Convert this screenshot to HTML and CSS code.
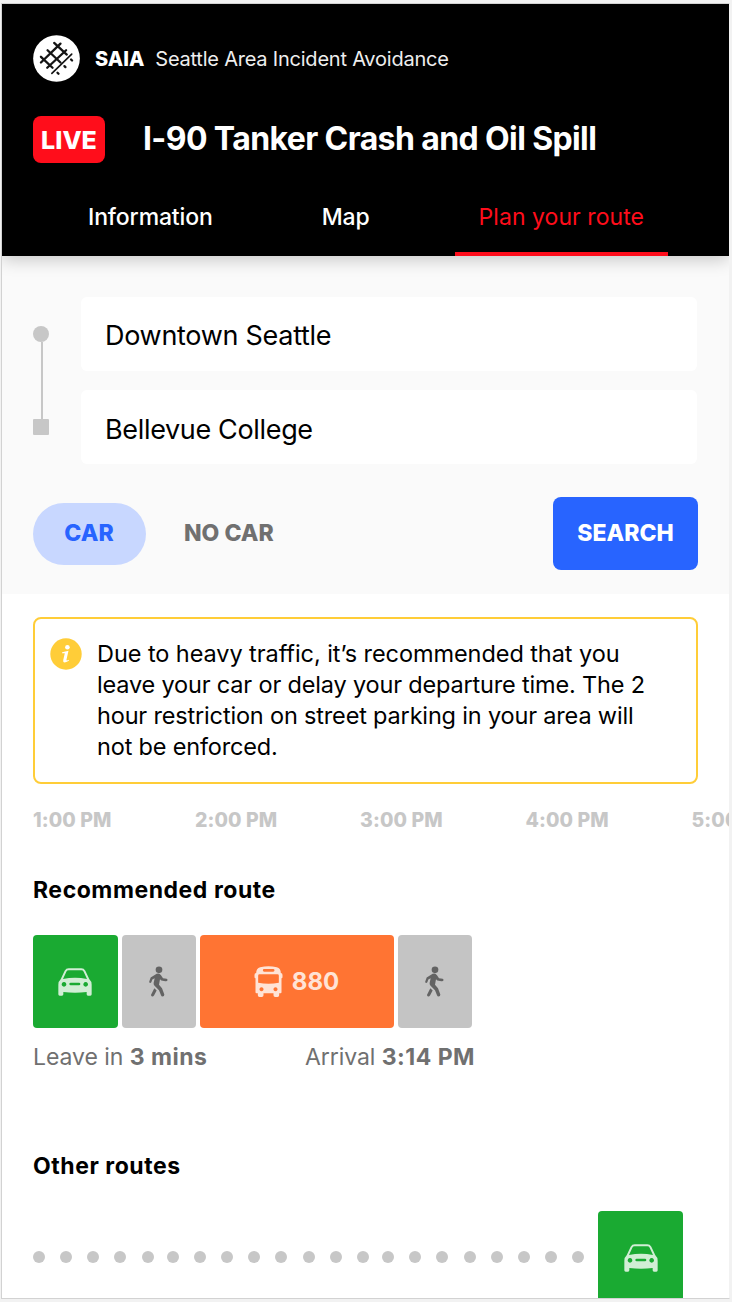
FILE: index.html
```html
<!DOCTYPE html>
<html lang="en">
<head>
<meta charset="utf-8">
<title>SAIA - Plan your route</title>
<link rel="stylesheet" href="styles.css">
</head>
<body>
<svg class="defs" width="0" height="0">
  <symbol id="car" viewBox="0 0 102 84">
    <path fill-rule="evenodd" d="M8 34 L20 8 Q24 1 32 1 H70 Q78 1 82 8 L94 34 Q101 40 101 50 V79 Q101 83 97 83 H90 Q86 83 86 79 V72 Q51 77 16 72 V79 Q16 83 12 83 H5 Q1 83 1 79 V50 Q1 40 8 34Z M15 33 Q51 26 87 33 L77 11 Q75 7 70 7 H32 Q27 7 25 11Z M18 42 a7 7 0 1 0 .01 0Z M83 42 a7 7 0 1 0 .01 0Z M38 44 a4 4 0 0 0 0 8 H63 a4 4 0 0 0 0 -8Z"/>
  </symbol>
  <symbol id="walk" viewBox="0 0 57 92">
    <circle cx="30" cy="11" r="10"/>
    <path d="M23 23 Q31 20 36 27 L42 36 L53 38 Q57 40 55 44 Q53 46 49 45 L37 43 L33 39 L30 56 L39 66 L46 85 Q46 91 41 91 Q37 91 36 87 L30 72 L16 58 Q13 55 14 50 L17 36 L10 40 L7 48 Q4 52 1 49 Q0 47 1 45 L5 34Z"/>
    <path d="M16 66 L23 73 L15 88 Q12 92 8 90 Q5 88 7 84Z"/>
  </symbol>
  <symbol id="bus" viewBox="0 0 86 93">
    <path fill-rule="evenodd" d="M6 21 Q6 8 18 4 Q43 -2 68 4 Q80 8 80 21 Q85 21 85 27 V33 Q85 37 82 37 V79 Q82 82 79 82 H75 V88 Q75 93 70 93 H63 Q58 93 58 88 V82 H28 V88 Q28 93 23 93 H16 Q11 93 11 88 V82 H7 Q4 82 4 79 V37 Q1 37 1 33 V27 Q1 21 6 21Z M30 9 a4 4 0 0 0 0 8 H57 a4 4 0 0 0 0 -8Z M16 25 Q12 25 12 29 V50 Q43 56 74 50 V29 Q74 25 70 25Z M22 64 a6 6 0 1 0 .01 0Z M64 64 a6 6 0 1 0 .01 0Z"/>
  </symbol>
</svg>
<main class="screen">
  <header class="header">
    <div class="brand">
      <svg class="logo" viewBox="20 20 142 142">
        <circle cx="91" cy="91" r="70.5" fill="#fff"/>
        <g stroke="#141414" stroke-width="7" stroke-linecap="round">
          <path d="M44 103 L103 46 M63 119 L120 66 M44 86 L79 119 M64 66 L103 103 M84 44 L122 79"/>
          <path d="M77 136 L137 78" stroke-width="5"/>
          <path d="M94 134 L97 137 M115 114 L118 117 M135 94 L138 97"/>
        </g>
      </svg>
      <strong class="brand-name">SAIA</strong>
      <span class="brand-full">Seattle Area Incident Avoidance</span>
    </div>
    <div class="incident">
      <span class="live">LIVE</span>
      <h1 class="title">I-90 Tanker Crash and Oil Spill</h1>
    </div>
    <nav class="tabs">
      <a class="tab">Information</a>
      <a class="tab">Map</a>
      <a class="tab active">Plan your route</a>
    </nav>
  </header>
  <section class="planner">
    <div class="fields">
      <div class="trip-line"><i class="start"></i><i class="line"></i><i class="end"></i></div>
      <div class="inputs">
        <div class="field">Downtown Seattle</div>
        <div class="field to">Bellevue College</div>
      </div>
    </div>
    <div class="options">
      <button class="pill">CAR</button>
      <button class="plain">NO CAR</button>
      <button class="search">SEARCH</button>
    </div>
  </section>
  <section class="results">
    <div class="alert">
      <svg class="info" viewBox="0 0 32 32">
        <circle cx="16" cy="16" r="15.7" fill="#ffcd38"/>
        <circle cx="17.4" cy="9.2" r="2.3" fill="#fff"/>
        <path d="M12.2 14.2 L18.5 12.8 L16.4 22 Q16.6 23 18.7 21.8 L18.9 22.8 Q12.6 26.6 13.2 22.2 L14.8 15.2 L12 15.2Z" fill="#fff"/>
      </svg>
      <p class="alert-text"><span class="lead">Due to heavy traffic, it’s recommended that you</span><br>leave your car or delay your departure time. The 2<br>hour restriction on street parking in your area will<br>not be enforced.</p>
    </div>
    <div class="times"><span>1:00 PM</span><span>2:00 PM</span><span>3:00 PM</span><span>4:00 PM</span><span>5:00 PM</span></div>
    <h2 class="heading recommended">Recommended route</h2>
    <div class="route">
      <div class="leg drive"><svg class="car"><use href="#car"/></svg></div>
      <div class="leg foot"><svg class="walk"><use href="#walk"/></svg></div>
      <div class="leg transit"><svg class="bus"><use href="#bus"/></svg><b class="bus-no">880</b></div>
      <div class="leg foot"><svg class="walk"><use href="#walk"/></svg></div>
    </div>
    <div class="summary"><span>Leave in <b>3 mins</b></span><span>Arrival <b>3:14 PM</b></span></div>
    <h2 class="heading other">Other routes</h2>
    <div class="route later">
      <div class="wait">
        <div class="dots"><i></i><i></i><i></i><i></i><i></i></div>
        <div class="dots"><i></i><i></i><i></i><i></i><i></i><i></i><i></i><i></i></div>
        <div class="dots"><i></i><i></i><i></i><i></i><i></i><i></i><i></i><i></i></div>
      </div>
      <div class="leg drive"><svg class="car"><use href="#car"/></svg></div>
    </div>
  </section>
</main>
</body>
</html>
```
FILE: styles.css
```css
* { box-sizing: border-box; }
body {
  margin: 0;
  height: 1302px;
  padding: 3px 2px 3px 1px;
  overflow: hidden;
  background: #f2f2f2;
  font-family: Inter, "Liberation Sans", sans-serif;
  color: #000;
}
.defs { display: block; height: 0; }
.screen {
  height: 1296px;
  overflow: hidden;
  border: 1px solid #d2d2d2;
  border-right-color: #f2f2f2;
  background: #fff;
}
.header {
  position: relative;
  height: 252px;
  padding: 31px 31px 0;
  background: #000;
  color: #fff;
  box-shadow: 0 4px 16px rgba(0, 0, 0, .2);
}
.brand { display: flex; align-items: center; height: 47px; }
.logo { width: 47px; height: 47px; }
.brand-name { margin-left: 15px; font-size: 20px; font-weight: 800; letter-spacing: 0; }
.brand-full { margin-left: 11px; font-size: 20px; letter-spacing: -.22px; color: #eee; }
.incident { display: flex; align-items: center; margin-top: 34px; height: 47px; }
.live {
  width: 72px;
  height: 47px;
  border-radius: 8px;
  background: #ff0d1b;
  font-size: 25px;
  font-weight: 800;
  line-height: 49px;
  text-align: center;
}
.title { margin: 0 0 1px 38px; font-size: 32px; line-height: 40px; letter-spacing: -.61px; white-space: nowrap; }
.tabs { display: flex; margin-top: 22px; height: 71px; gap: 61px; }
.tab { height: 71px; padding: 0 24px; font-size: 23px; font-weight: 500; line-height: 64px; letter-spacing: -.13px; white-space: nowrap; }
.tab:first-child { margin-left: 31px; }
.active { border-bottom: 4px solid #ff0d1b; color: #ff0d1b; font-weight: 400; letter-spacing: .05px; }
.planner { height: 338px; padding: 41px 31px 0; background: #fafafa; }
.fields { display: flex; gap: 32px; }
.trip-line { display: flex; flex-direction: column; align-items: center; width: 16px; padding-top: 29px; }
.start { width: 16px; height: 16px; border-radius: 50%; background: #c7c7c7; }
.line { width: 2px; height: 77px; margin-left: 2px; background: #c7c7c7; }
.end { width: 16px; height: 16px; border-radius: 1px; background: #c7c7c7; }
.inputs { display: flex; flex-direction: column; gap: 19.5px; width: 616px; }
.field { height: 73.5px; padding-left: 24px; border-radius: 6px; background: #fff; font-size: 27px; line-height: 77px; letter-spacing: -.29px; }
.to { line-height: 79px; letter-spacing: -.34px; }
.options { display: flex; align-items: center; margin-top: 32.5px; height: 74px; }
button { border: 0; padding: 0; font: 800 23px/28px Inter, sans-serif; }
.pill { width: 113px; height: 62px; margin-top: 1px; padding: 0 1px 1px 0; border-radius: 31px; background: #c8d7ff; color: #2864ff; }
.plain { margin-left: 38px; background: none; color: #707070; }
.search { margin-left: auto; width: 145px; height: 73px; padding-bottom: 1px; border-radius: 8px; background: #2864ff; color: #fff; }
.results { padding: 23px 31px 0; }
.alert { display: flex; gap: 15px; width: 665px; height: 167px; padding: 19px 15px; border: 2px solid #ffcd38; border-radius: 8px; }
.info { width: 32px; height: 32px; }
.alert-text { margin: 0; font-size: 23.5px; line-height: 31px; letter-spacing: -.17px; white-space: nowrap; }
.lead { letter-spacing: -.07px; }
.times { display: grid; grid-template-columns: 162px 165px 165.5px 166px 90px; margin-top: 24px; height: 24px; font-size: 19.5px; font-weight: 800; line-height: 25px; color: #c7c7c7; letter-spacing: .1px; white-space: nowrap; }
.heading { margin: 0; font-size: 23px; line-height: 32px; letter-spacing: .55px; }
.recommended { margin-top: 42px; }
.route { display: flex; gap: 4px; margin-top: 29px; }
.leg { display: flex; align-items: center; justify-content: center; flex: none; height: 93px; border-radius: 4px; }
.drive { width: 85px; background: #1aaa32; }
.foot { width: 74px; background: #c4c4c4; }
.transit { width: 194px; background: #ff7433; }
.car { width: 34px; height: 28px; margin-right: 2px; fill: #d1eed5; }
.later .car { margin-right: 0; }
.walk { width: 19px; height: 31px; margin-right: 1px; fill: #636363; }
.bus { width: 29px; height: 31px; fill: #ffe3d6; }
.bus-no { margin-left: 9px; margin-right: 1px; font-size: 24px; color: #ffe3d6; }
.summary { display: flex; justify-content: space-between; width: 442px; margin-top: 13px; font-size: 23px; line-height: 32px; letter-spacing: -.05px; color: #707070; white-space: nowrap; }
.summary b { letter-spacing: .5px; }
.other { margin-top: 77px; }
.wait { display: flex; align-items: center; gap: 13.2px; width: 561px; flex: none; padding-bottom: 1px; }
.dots { display: flex; gap: 15.17px; }
.dots i { width: 12px; height: 12px; border-radius: 50%; background: #c7c7c7; }
```
